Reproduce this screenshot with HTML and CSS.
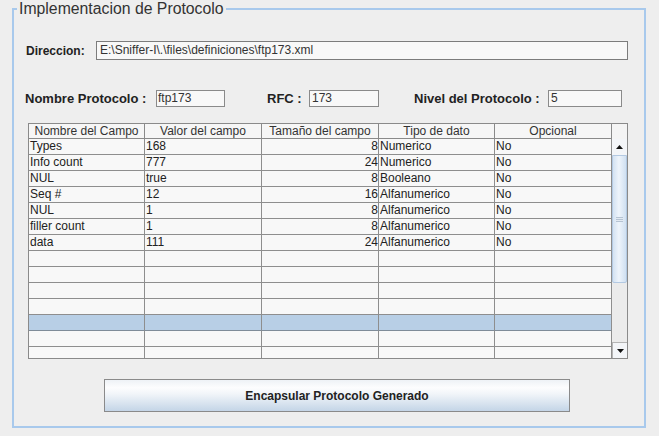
FILE: index.html
```html
<!DOCTYPE html>
<html>
<head>
<meta charset="utf-8">
<link rel="stylesheet" href="styles.css">
</head>
<body>
<fieldset class="panel">
  <legend class="panel-title">Implementacion de Protocolo</legend>
  <div class="row dir-row">
    <span class="lbl lbl-dir">Direccion:</span>
    <div class="field field-dir">E:\Sniffer-I\.\files\definiciones\ftp173.xml</div>
  </div>
  <div class="row meta-row">
    <span class="lbl lbl-nombre">Nombre Protocolo :</span>
    <div class="field field-small field-nombre">ftp173</div>
    <span class="lbl lbl-rfc">RFC :</span>
    <div class="field field-small field-rfc">173</div>
    <span class="lbl lbl-nivel">Nivel del Protocolo :</span>
    <div class="field field-small field-nivel">5</div>
  </div>
  <div class="scrollpane">
    <div class="thead">
      <div class="cols">
        <div class="hcell">Nombre del Campo</div>
        <div class="hcell">Valor del campo</div>
        <div class="hcell">Tamaño del campo</div>
        <div class="hcell">Tipo de dato</div>
        <div class="hcell">Opcional</div>
      </div>
      <div class="corner"></div>
    </div>
    <div class="tbody">
      <div class="viewport">
        <div class="cols"><div class="cell">Types</div><div class="cell">168</div><div class="cell num">8</div><div class="cell">Numerico</div><div class="cell">No</div></div>
        <div class="cols"><div class="cell">Info count</div><div class="cell">777</div><div class="cell num">24</div><div class="cell">Numerico</div><div class="cell">No</div></div>
        <div class="cols"><div class="cell">NUL</div><div class="cell">true</div><div class="cell num">8</div><div class="cell">Booleano</div><div class="cell">No</div></div>
        <div class="cols"><div class="cell">Seq #</div><div class="cell">12</div><div class="cell num">16</div><div class="cell">Alfanumerico</div><div class="cell">No</div></div>
        <div class="cols"><div class="cell">NUL</div><div class="cell">1</div><div class="cell num">8</div><div class="cell">Alfanumerico</div><div class="cell">No</div></div>
        <div class="cols"><div class="cell">filler count</div><div class="cell">1</div><div class="cell num">8</div><div class="cell">Alfanumerico</div><div class="cell">No</div></div>
        <div class="cols"><div class="cell">data</div><div class="cell">111</div><div class="cell num">24</div><div class="cell">Alfanumerico</div><div class="cell">No</div></div>
        <div class="cols"><div class="cell"></div><div class="cell"></div><div class="cell"></div><div class="cell"></div><div class="cell"></div></div>
        <div class="cols"><div class="cell"></div><div class="cell"></div><div class="cell"></div><div class="cell"></div><div class="cell"></div></div>
        <div class="cols"><div class="cell"></div><div class="cell"></div><div class="cell"></div><div class="cell"></div><div class="cell"></div></div>
        <div class="cols"><div class="cell"></div><div class="cell"></div><div class="cell"></div><div class="cell"></div><div class="cell"></div></div>
        <div class="cols selected"><div class="cell"></div><div class="cell"></div><div class="cell"></div><div class="cell"></div><div class="cell"></div></div>
        <div class="cols"><div class="cell"></div><div class="cell"></div><div class="cell"></div><div class="cell"></div><div class="cell"></div></div>
        <div class="cols"><div class="cell"></div><div class="cell"></div><div class="cell"></div><div class="cell"></div><div class="cell"></div></div>
      </div>
      <div class="vscroll">
        <div class="sb-btn sb-up"><svg width="7" height="4" viewBox="0 0 7 4"><path d="M0 4 L3.5 0 L7 4 Z" fill="#111"/></svg></div>
        <div class="sb-thumb"><div class="grip"></div></div>
        <div class="sb-track"></div>
        <div class="sb-btn sb-down"><svg width="7" height="4" viewBox="0 0 7 4"><path d="M0 0 L7 0 L3.5 4 Z" fill="#111"/></svg></div>
      </div>
    </div>
  </div>
  <div class="actions">
    <button class="btn">Encapsular Protocolo Generado</button>
  </div>
</fieldset>
</body>
</html>
```
FILE: styles.css
```css
html, body {
  margin: 0;
  padding: 0;
}
body {
  background: #eeeeee;
  font-family: "Liberation Sans", Arial, sans-serif;
  color: #222;
  width: 659px;
  height: 436px;
  overflow: hidden;
}
.panel {
  margin: 0 0 0 12px;
  padding: 0 0 14px 0;
  width: 634px;
  box-sizing: border-box;
  border: 2px solid #a8c9ec;
  min-width: 0;
}
.panel-title {
  margin-left: 3px;
  padding: 0 2px;
  font-size: 15.8px;
  line-height: 18px;
  color: #333;
}
.row {
  display: flex;
  align-items: center;
}
.dir-row {
  margin-top: 23px;
  height: 19px;
}
.lbl {
  flex: none;
  font-weight: bold;
  font-size: 12px;
  color: #222;
  white-space: nowrap;
}
.lbl-dir {
  margin-left: 12px;
  width: 70px;
}
.field {
  flex: none;
  box-sizing: border-box;
  border: 1px solid #7c7c7c;
  background: #f8f8f8;
  font-size: 12px;
  color: #333;
  white-space: nowrap;
  overflow: hidden;
}
.field-dir {
  width: 532px;
  height: 19px;
  line-height: 17px;
  padding-left: 3px;
}
.meta-row {
  margin-top: 30px;
  height: 17px;
}
.meta-row .lbl {
  font-size: 13px;
}
.field-small {
  height: 17px;
  line-height: 15px;
  padding-left: 2px;
  border-color: #8a8a8a;
}
.lbl-nombre { margin-left: 11px; width: 131px; }
.field-nombre { width: 69px; padding-left: 1px; }
.lbl-rfc { margin-left: 42px; width: 42px; }
.field-rfc { width: 70px; }
.lbl-nivel { margin-left: 35px; width: 134px; }
.field-nivel { width: 74px; }

.scrollpane {
  margin: 16px 0 0 14px;
  width: 600px;
  height: 236px;
  box-sizing: border-box;
  border: 1px solid #8a8a8a;
  background: #f8f8f8;
}
.thead {
  display: flex;
  height: 15px;
}
.cols {
  display: grid;
  grid-template-columns: 116px 117px 117px 116px 117px;
  width: 583px;
}
.hcell {
  box-sizing: border-box;
  height: 15px;
  border-right: 1px solid #8a8a8a;
  border-bottom: 1px solid #8a8a8a;
  text-align: center;
  font-size: 12px;
  line-height: 14px;
  color: #333;
  white-space: nowrap;
  overflow: hidden;
  background: #f6f6f6;
}
.corner {
  width: 15px;
  height: 15px;
  box-sizing: border-box;
  background: #f4f4f4;
}
.tbody {
  display: flex;
  height: 219px;
}
.viewport {
  width: 583px;
  height: 219px;
  overflow: hidden;
}
.cell {
  box-sizing: border-box;
  height: 16px;
  border-right: 1px solid #8e8e8e;
  border-bottom: 1px solid #8e8e8e;
  padding: 0 1px;
  font-size: 12px;
  line-height: 15px;
  color: #222;
  white-space: nowrap;
  overflow: hidden;
}
.cell.num {
  text-align: right;
  padding-right: 0;
}
.selected .cell {
  background: #b8cfe6;
  border-bottom-color: #7f8c99;
}
.vscroll {
  width: 15px;
  height: 219px;
  display: flex;
  flex-direction: column;
  background: #e9e9e9;
}
.sb-btn {
  height: 16px;
  box-sizing: border-box;
  display: flex;
  align-items: center;
  justify-content: center;
  background: #f3f5f8;
}
.sb-down {
  border: 1px solid #b4b4b4;
  border-right: none;
  border-bottom: none;
}
.sb-thumb {
  height: 128px;
  box-sizing: border-box;
  border: 1px solid #b3c9e2;
  border-radius: 0 0 2px 2px;
  background: linear-gradient(to right, #d3e2f2, #eef4fb 45%, #d0e0f1);
  display: flex;
  align-items: center;
  justify-content: center;
}
.grip {
  width: 7px;
  height: 5px;
  background: repeating-linear-gradient(#b5c3d3 0 1px, #e3eaf2 1px 2px);
}
.sb-track {
  height: 59px;
  background: #ebebeb;
}
.actions {
  margin: 20px 0 0 90px;
}
.btn {
  display: block;
  width: 466px;
  height: 33px;
  margin: 0;
  padding: 0;
  border: 1px solid #8a8a8a;
  border-radius: 0;
  background: linear-gradient(#eef2f6 0, #fdfdfe 25%, #f1f5f9 45%, #c4d5e7 100%);
  font-family: "Liberation Sans", Arial, sans-serif;
  font-weight: bold;
  font-size: 12px;
  color: #222;
}
```
